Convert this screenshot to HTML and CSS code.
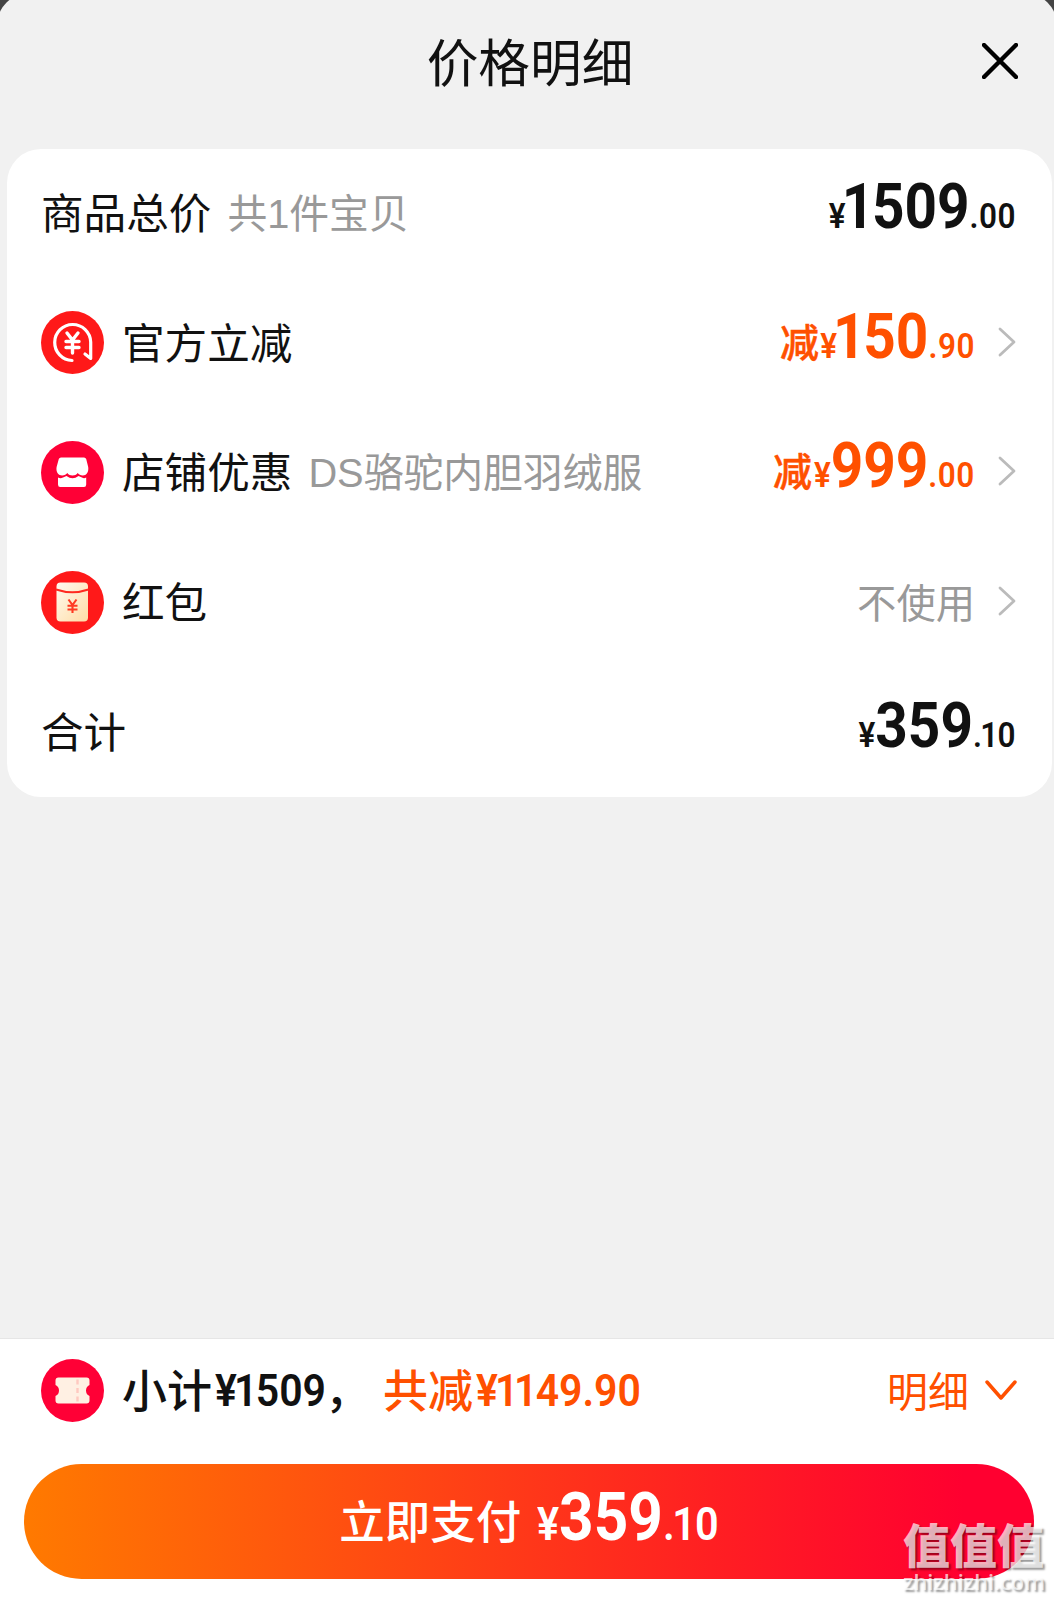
FILE: index.html
```html
<!DOCTYPE html>
<html lang="zh-CN">
<head>
  <meta charset="UTF-8">
  <title>价格明细</title>
  <link rel="stylesheet" href="styles.css">
</head>
<body>
  <div class="sheet">
    <div class="header">
      <h1>价格明细</h1>
      <svg class="close" viewBox="0 0 36 36"><path d="M2 2l32 32M34 2l-32 32"/></svg>
    </div>

    <div class="card">
      <div class="row">
        <span class="label">商品总价</span>
        <span class="sub">共1件宝贝</span>
        <div class="price"><small>¥</small><b><i>1</i>509</b><small class="dec">.00</small></div>
      </div>
      <div class="row">
        <svg class="icon" viewBox="0 0 63 63">
          <circle cx="31.5" cy="31.5" r="31.5" fill="#ff1919"/>
          <path d="M31 49.5A18 18 0 1 1 49.7 31V47.5L44 43" fill="none" stroke="#fff" stroke-width="3.2" stroke-linecap="round" stroke-linejoin="round"/>
          <path d="M26 22l5.5 7 5.5-7M31.5 29v13M25 30.5h13M25 36.5h13" fill="none" stroke="#fff" stroke-width="3.4" stroke-linecap="round"/>
        </svg>
        <span class="label">官方立减</span>
        <span class="cut">减</span>
        <div class="price orange"><small>¥</small><b><i>1</i>50</b><small class="dec">.90</small></div>
        <svg class="arrow" viewBox="0 0 18 30"><path d="M2 2l14 13L2 28"/></svg>
      </div>
      <div class="row">
        <svg class="icon" viewBox="0 0 63 63">
          <circle cx="31.5" cy="31.5" r="31.5" fill="#ff0036"/>
          <path d="M20 16.5h23q1.6 0 2.2 1.5l2 8c.8 5-2 8.5-5.3 8.5-2.5 0-4-1-5.2-2.5-1.5 1.8-3 2.5-5.2 2.5s-3.7-.7-5.2-2.5c-1.2 1.5-2.7 2.5-5.2 2.5-3.6 0-6.4-3.5-5.5-8.5l2.2-8q.5-1.5 2.2-1.5z" fill="#fff"/>
          <path d="M17 36.5q2.5 1.5 5 0l3.5-1.5q6 4.5 12 0l3.5 1.5q2 1.5 4.2 0V43.5q0 2.5-2.2 2.5H19.2q-2.2 0-2.2-2.5z" fill="#fff"/>
        </svg>
        <span class="label">店铺优惠</span>
        <span class="sub">DS骆驼内胆羽绒服</span>
        <span class="cut">减</span>
        <div class="price orange"><small>¥</small><b>999</b><small class="dec">.00</small></div>
        <svg class="arrow" viewBox="0 0 18 30"><path d="M2 2l14 13L2 28"/></svg>
      </div>
      <div class="row">
        <svg class="icon" viewBox="0 0 63 63">
          <defs>
            <linearGradient id="packet" x1="0" y1="0" x2="1" y2="1">
              <stop offset="0" stop-color="#fffaf0"/>
              <stop offset="1" stop-color="#ffdca5"/>
            </linearGradient>
          </defs>
          <circle cx="31.5" cy="31.5" r="31.5" fill="#ff1919"/>
          <rect x="15.5" y="11.5" width="31.5" height="39" rx="4" fill="url(#packet)"/>
          <path d="M15 18.5q16.5 5.5 32.5 0" fill="none" stroke="#ff2a20" stroke-width="2"/>
          <path d="M27.5 28.5l4 5.5 4-5.5M31.5 34v8M26.5 34.8h10M26.5 38.5h10" fill="none" stroke="#ff3a22" stroke-width="2.1"/>
        </svg>
        <span class="label">红包</span>
        <span class="unused">不使用</span>
        <svg class="arrow" viewBox="0 0 18 30"><path d="M2 2l14 13L2 28"/></svg>
      </div>
      <div class="row">
        <span class="label">合计</span>
        <div class="price"><small>¥</small><b>359</b><small class="dec">.<i>1</i>0</small></div>
      </div>
    </div>

    <div class="footer">
      <div class="summary">
        <svg class="icon" viewBox="0 0 63 63">
          <circle cx="31.5" cy="31.5" r="31.5" fill="#ff0036"/>
          <path d="M17.5 18.5h28q3 0 3 3v4.500q-3.500 1.500-3.500 5.500t3.500 5.500v4.500q0 3-3 3h-28q-3 0-3-3V37q3.500-1.500 3.500-5.500t-3.500-5.500v-4.500q0-3 3-3z" fill="#fff0e3"/>
          <path d="M36.5 20.500v24" stroke="#ffc9c0" stroke-width="2.4" stroke-dasharray="5 3.500"/>
        </svg>
        <span class="sum-cn">小计</span><span class="sum-num n1">¥<i>1</i>509</span><span class="sum-cn comma">，</span>
        <span class="sum-cn orange">共减</span><span class="sum-num orange">¥<i>1</i><i>1</i>49.90</span>
        <div class="detail"><span>明细</span>
          <svg viewBox="0 0 32 21"><path d="M2 2l14 16L30 2"/></svg>
        </div>
      </div>
      <div class="pay">
        <span class="pay-text">立即支付</span>
        <div class="price"><small>¥</small><b>359</b><small class="dec">.<i>1</i>0</small></div>
      </div>
    </div>
  </div>

  <div class="watermark">
    <div class="wm-cn">值值值</div>
    <div class="wm-en">zhizhizhi.com</div>
  </div>
</body>
</html>
```

FILE: styles.css
```css
* {
    box-sizing: border-box;
}
html {
    background-color: #444;
    overflow: hidden;
}
body {
    margin: 0;
    font-family: "Noto Sans CJK SC", sans-serif;
    color: #111;
}
/* The rounded top runs slightly past the screen edges */
.sheet {
    display: flex;
    flex-direction: column;
    height: 1609px;
    margin: -8px -4px 0;
    padding: 8px 4px 0;
    background-color: #f1f1f1;
    border-radius: 36px 36px 0 0;
}
.header {
    position: relative;
    height: 149px;
    text-align: center;
    padding-left: 6px;
}
.header h1 {
    margin: 0;
    font-size: 51.7px;
    font-weight: 400;
    line-height: 120px;
}
.close {
    position: absolute;
    right: 36px;
    top: 43px;
    width: 36px;
    height: 36px;
}
.close path {
    stroke: #000;
    stroke-width: 4.4;
    stroke-linecap: round;
}

/* Card */
.card {
    height: 648px;
    margin: 0 2px 0 7px;
    padding: 0 36px 0 34px;
    background-color: #fff;
    border-radius: 34px;
    display: flex;
    flex-direction: column;
}
.row {
    flex: 1;
    display: flex;
    align-items: center;
    white-space: nowrap;
    padding-bottom: 1px;
}
.icon {
    width: 63px;
    height: 63px;
    margin-right: 18px;
    flex: none;
}
.label {
    font-size: 42.6px;
    padding-bottom: 5px;
}
.sub {
    margin-left: 16px;
    padding-bottom: 6px;
    font-family: "Liberation Sans", "Noto Sans CJK SC", sans-serif;
    font-size: 39.8px;
    color: #999;
}
.orange,
.cut {
    color: #ff5000;
}

/* Narrow digits */
.price {
    margin-left: auto;
    font-family: Roboto, sans-serif;
    line-height: 70px;
    transform: scaleX(.9);
    transform-origin: right center;
    position: relative;
    top: 2px;
}
.price b {
    font-size: 63px;
    font-weight: 700;
}
.price small {
    font-size: 35px;
    font-weight: 600;
}
.price .dec {
    letter-spacing: .6px;
}
.price i,
.sum-num i {
    font-style: normal;
    margin: 0 -.04em 0 -.07em;
}
.cut {
    margin-left: auto;
    margin-right: -16px;
    padding-bottom: 6px;
    font-size: 39px;
    font-weight: 500;
    -webkit-text-stroke: .5px #ff5000;
}
.cut + .price {
    margin-left: 0;
}
.unused {
    margin-left: auto;
    padding-bottom: 4px;
    font-size: 39.3px;
    color: #999;
}
.arrow {
    width: 18px;
    height: 30px;
    margin-left: 23px;
    margin-bottom: 2px;
    flex: none;
}
.arrow path {
    fill: none;
    stroke: #bbb;
    stroke-width: 2.8;
    stroke-linecap: round;
    stroke-linejoin: round;
}

/* Bottom bar */
.footer {
    margin-top: auto;
    height: 263px;
    padding: 0 20px 0 24px;
    border-top: 1px solid #e6e6e6;
    background-color: #fff;
}
.summary {
    display: flex;
    align-items: center;
    height: 103px;
    padding: 0 17px;
    white-space: nowrap;
}
.sum-cn {
    padding-bottom: 5px;
    font-size: 45px;
    font-weight: 500;
}
.sum-num {
    margin-left: 3px;
    font-family: Roboto, sans-serif;
    font-size: 45px;
    font-weight: 600;
    transform: scaleX(.91);
    transform-origin: left center;
}
.n1 {
    margin-right: -12px;
}
.comma {
    margin-right: 13px;
}
.detail {
    display: flex;
    align-items: center;
    margin-left: auto;
    font-size: 41px;
    color: #ff5000;
}
.detail span {
    padding-bottom: 3px;
}
.detail svg {
    width: 32px;
    height: 21px;
    margin-left: 16px;
}
.detail path {
    fill: none;
    stroke: #ff5000;
    stroke-width: 3.5;
    stroke-linecap: round;
    stroke-linejoin: round;
}
.pay {
    display: flex;
    align-items: center;
    justify-content: center;
    height: 115px;
    margin-top: 22px;
    padding-left: 21px;
    border-radius: 58px;
    background: linear-gradient(90deg, #ff7a00, #ff1f22 68%, #ff0030 93%);
    color: #fff;
    font-size: 45.5px;
    font-weight: 500;
}
.pay-text {
    padding-bottom: 5px;
}
.pay .price {
    margin-left: 16px;
    transform-origin: left center;
    top: -1px;
}
.pay .price b {
    font-size: 67px;
}
.pay .price small {
    font-size: 46px;
}

.watermark {
    position: absolute;
    left: 903px;
    top: 1515px;
    color: rgba(255, 255, 255, .7);
    text-shadow: 2px 2px 2px rgba(0, 0, 0, .4);
}
.wm-cn {
    font-size: 47px;
    font-weight: 900;
    line-height: 56px;
}
.wm-en {
    font-family: "Open Sans", sans-serif;
    font-size: 21.8px;
    font-weight: 600;
    line-height: 22px;
}
```
